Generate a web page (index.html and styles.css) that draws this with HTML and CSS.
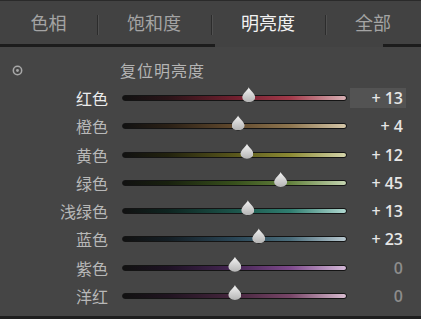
FILE: index.html
```html
<!DOCTYPE html>
<html lang="zh-CN">
  <head>
    <meta charset="UTF-8" />
    <title>HSL 明亮度</title>
    <link rel="stylesheet" href="styles.css">
  </head>
  <body>
    <div class="panel">
      <div class="tabs">
        <div class="tab">色相</div>
        <div class="tab">饱和度</div>
        <div class="tab active">明亮度</div>
        <div class="tab">全部</div>
      </div>
      <div class="underline"><span></span><span class="gap"></span><span></span></div>

      <div class="sliders">
        <div class="reset">
          <svg class="target" viewBox="0 0 10 10" width="11" height="11">
            <circle cx="5" cy="5" r="3.8" fill="none" stroke="#a8a8a8" stroke-width="1.4" />
            <circle cx="5" cy="5" r="1.3" fill="#a8a8a8" />
          </svg>
          <span class="reset-label">复位明亮度</span>
        </div>

        <div class="row current">
          <span class="label">红色</span>
          <div class="track red"><span class="thumb" style="left: 56.4%"></span></div>
          <span class="value boxed">+ 13</span>
        </div>
        <div class="row">
          <span class="label">橙色</span>
          <div class="track orange"><span class="thumb" style="left: 51.6%"></span></div>
          <span class="value">+ 4</span>
        </div>
        <div class="row">
          <span class="label">黄色</span>
          <div class="track yellow"><span class="thumb" style="left: 55.6%"></span></div>
          <span class="value">+ 12</span>
        </div>
        <div class="row">
          <span class="label">绿色</span>
          <div class="track green"><span class="thumb" style="left: 70.7%"></span></div>
          <span class="value">+ 45</span>
        </div>
        <div class="row">
          <span class="label">浅绿色</span>
          <div class="track aqua"><span class="thumb" style="left: 56%"></span></div>
          <span class="value">+ 13</span>
        </div>
        <div class="row">
          <span class="label">蓝色</span>
          <div class="track blue"><span class="thumb" style="left: 60.9%"></span></div>
          <span class="value">+ 23</span>
        </div>
        <div class="row">
          <span class="label">紫色</span>
          <div class="track purple"><span class="thumb" style="left: 50.2%"></span></div>
          <span class="value zero">0</span>
        </div>
        <div class="row">
          <span class="label">洋红</span>
          <div class="track magenta"><span class="thumb" style="left: 50.2%"></span></div>
          <span class="value zero">0</span>
        </div>
      </div>
    </div>
  </body>
</html>
```

FILE: styles.css
```css
* {
  box-sizing: border-box;
}

html,
body {
  margin: 0;
  padding: 0;
  background-color: #454545;
}

body {
  font-family: "Noto Sans CJK SC", "Noto Sans", sans-serif;
}

.panel {
  width: 421px;
  height: 319px;
  background-color: #454545;
  border-top: 1px solid #2a2a2a;
  border-bottom: 3px solid #1e1e1e;
  overflow: hidden;
}

/* tabs */
.tabs {
  display: grid;
  grid-template-columns: 97px 114px 114px 1fr;
  height: 43px;
  background-color: #424242;
}

.tab {
  display: flex;
  justify-content: center;
  align-items: center;
  font-size: 18px;
  color: #a4a4a4;
  position: relative;
  padding-bottom: 2px;
}

.tab + .tab::before {
  content: "";
  position: absolute;
  left: 0;
  top: 14px;
  height: 20px;
  border-left: 1px solid #2c2c2c;
  border-right: 1px solid #505050;
}

.tab.active {
  color: #f2f2f2;
}

.underline {
  display: grid;
  grid-template-columns: 215px 168px 1fr;
  height: 3px;
}

.underline span {
  background-color: #1c1c1c;
}

.underline .gap {
  background-color: #424242;
}

/* slider list */
.sliders {
  padding-top: 9px;
}

.reset {
  display: flex;
  align-items: center;
  height: 28px;
  padding-left: 12px;
}

.target {
  display: block;
}

.reset-label {
  margin-left: 97px;
  font-size: 16px;
  letter-spacing: 1px;
  color: #b4b4b4;
}

.row {
  display: grid;
  grid-template-columns: 108px 239px 59px;
  align-items: center;
  height: 28.25px;
}

.label {
  text-align: right;
  font-size: 16px;
  color: #b8b8b8;
}

.current .label {
  color: #ececec;
}

.track {
  position: relative;
  height: 6px;
  margin-left: 14px;
  border-radius: 3px;
  border: 1px solid #141414;
}

.value {
  margin-left: 3px;
  text-align: right;
  font-family: "Open Sans", "Noto Sans", sans-serif;
  font-weight: 600;
  font-size: 16px;
  color: #e6e6e6;
  padding-right: 3px;
  line-height: 20px;
}

.value.boxed {
  background-color: #535353;
}

.value.zero {
  color: #8c8c8c;
}

.thumb {
  position: absolute;
  top: -9px;
  width: 13px;
  height: 15px;
  margin-left: -6.5px;
  background: linear-gradient(#f4f4f4, #b4b4b4);
  clip-path: path("M6.5 0 C7.5 3 13 6.5 13 10 A6.5 5 0 0 1 0 10 C0 6.5 5.5 3 6.5 0 Z");
  filter: drop-shadow(0 1px 0 #111);
}

.red {
  background: linear-gradient(to right, #111 0%, #2a1418 20%, #701f2e 50%, #a23a4a 75%, #d8b0b4 100%);
}

.orange {
  background: linear-gradient(to right, #111 0%, #2a2016 20%, #624a2e 50%, #8e7650 75%, #d4c6a8 100%);
}

.yellow {
  background: linear-gradient(to right, #111 0%, #22220e 20%, #58561c 50%, #8c8a34 75%, #d4d4aa 100%);
}

.green {
  background: linear-gradient(to right, #111 0%, #18200e 20%, #38501c 50%, #64823e 75%, #c4d4b0 100%);
}

.aqua {
  background: linear-gradient(to right, #111 0%, #0e2420 20%, #1c544a 50%, #307e70 75%, #b0d8d0 100%);
}

.blue {
  background: linear-gradient(to right, #111 0%, #141e24 20%, #2a4656 50%, #4a6c7a 75%, #b8c8d0 100%);
}

.purple {
  background: linear-gradient(to right, #111 0%, #1e1224 20%, #462654 50%, #7e4a8c 75%, #d4b8d8 100%);
}

.magenta {
  background: linear-gradient(to right, #111 0%, #201420 20%, #46263e 50%, #784668 75%, #d8bcd0 100%);
}
```
